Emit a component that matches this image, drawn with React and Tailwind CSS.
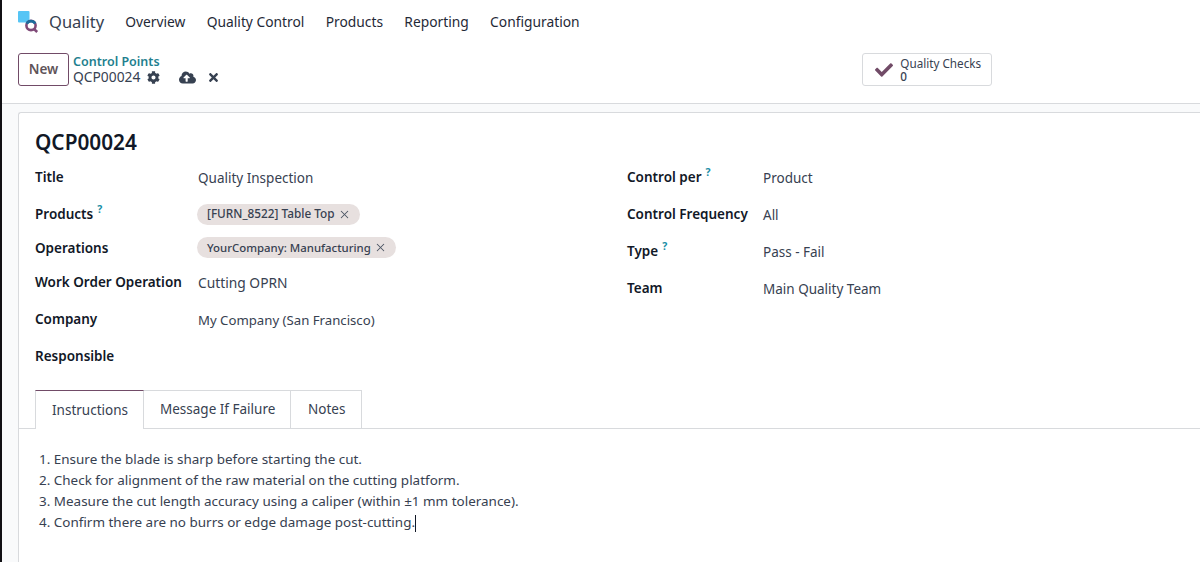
import { X } from "lucide-react";
import { FaCog, FaCloudUploadAlt, FaTimes, FaCheck } from "react-icons/fa";

const font = { fontFamily: '"Noto Sans", sans-serif' };

function Help() {
  return <span className="relative -top-[6px] ml-[4px] text-[10.5px] font-bold text-[#1a8ea6]">?</span>;
}

function Tag({ size, children }) {
  return (
    <span className={`-ml-px inline-flex h-[21px] items-center gap-[3px] rounded-full bg-[#e7e0df] pl-[10px] pr-[9px] ${size} font-medium leading-none text-[#374151]`}>
      {children}
      <X size={13} strokeWidth={1.9} className="text-[#4b5563]" />
    </span>
  );
}

function Row({ label, help, h, w, size = "text-[13.5px]", lift = "mt-[1px]", drop = "mt-[2px]", children }) {
  return (
    <div className={`flex items-center ${h}`}>
      <div className={`${w} ${lift} shrink-0 text-[13.5px] font-semibold leading-none text-[#111827]`}>
        {label}
        {help && <Help />}
      </div>
      <div className={`${size} ${drop} leading-none text-[#374151]`}>{children}</div>
    </div>
  );
}

export default function App() {
  return (
    <div style={font} className="flex h-[562px] w-[1200px] overflow-hidden bg-white text-[#374151]">
      <div className="w-[2px] shrink-0 bg-[#111014]" />
      <div className="flex min-w-0 flex-1 flex-col">
        <nav className="flex h-[44px] items-center pl-[16px]">
          <svg width="21" height="22" viewBox="0 0 21 22">
            <rect x="0" y="0" width="11.5" height="11.5" rx="1" fill="#56c5f5" />
            <circle cx="13" cy="14.5" r="4.6" fill="#fff" stroke="#7f4a78" strokeWidth="2.6" />
            <path d="M8.5 13.2A4.6 4.6 0 0 1 11.5 10.2V11.5H8.7z" fill="#1c6c9c" />
            <path d="M8.9 12.6a4.6 4.6 0 0 1 8.2 0" fill="none" stroke="#1c6c9c" strokeWidth="2.6" />
            <path d="M16 18l3.2 3" stroke="#7f4a78" strokeWidth="2.6" />
          </svg>
          <span className="ml-[10px] text-[16.5px] text-[#374151]">Quality</span>
          <div className="ml-[21px] flex gap-[21.3px] text-[13.8px] text-[#1f2937]">
            <span>Overview</span>
            <span>Quality Control</span>
            <span>Products</span>
            <span>Reporting</span>
            <span>Configuration</span>
          </div>
        </nav>

        <div className="flex h-[60px] items-start border-b border-[#d8dadd] pl-[16px] pt-[9px]">
          <button className="h-[33px] w-[51px] rounded-[3px] border border-[#714b67] text-[13.5px] font-semibold text-[#5f5459]">
            New
          </button>
          <div className="ml-[4px] flex flex-col">
            <span className="mt-[1px] text-[12.5px] font-semibold leading-[16px] text-[#1f7f8f]">Control Points</span>
            <div className="flex h-[14px] items-center text-[13.8px] leading-none text-[#374151]">
              <span>QCP00024</span>
              <FaCog size={13} className="ml-[7px] text-[#374151]" />
              <FaCloudUploadAlt size={17} className="ml-[19px] text-[#374151]" />
              <FaTimes size={13} className="ml-[11px] text-[#374151]" />
            </div>
          </div>
          <div className="ml-[642px] flex h-[33px] w-[130px] items-center rounded-[3px] border border-[#d8dadd] pl-[12px]">
            <FaCheck size={18} className="text-[#714b67]" />
            <div className="ml-[7px] flex flex-col text-[11.7px] leading-[12.5px] text-[#374151]">
              <span>Quality Checks</span>
              <span className="font-medium">0</span>
            </div>
          </div>
        </div>

        <div className="flex flex-1 bg-[#f9fafb] pl-[16px] pt-[8px]">
          <div className="flex-1 rounded-tl-[3px] border-l border-t border-[#d8dadd] bg-white">
            <div className="px-[16px] pt-[16px]">
              <h1 className="text-[20.8px] font-semibold leading-[27px] text-[#111827]">QCP00024</h1>
              <div className="mt-[3px] flex">
                <div className="w-[592px]">
                  <Row label="Title" h="h-[37px]" w="w-[163px]">Quality Inspection</Row>
                  <Row label="Products" help h="h-[36px]" w="w-[163px]" drop="mt-0"><Tag size="text-[11.8px]">[FURN_8522] Table Top</Tag></Row>
                  <Row label="Operations" h="h-[33px]" w="w-[163px]" drop="-mt-[2px]"><Tag size="text-[11.4px]">YourCompany: Manufacturing</Tag></Row>
                  <Row label="Work Order Operation" h="h-[36px]" w="w-[163px]" size="text-[13.8px]" lift="mt-0" drop="mt-0">Cutting OPRN</Row>
                  <Row label="Company" h="h-[37px]" w="w-[163px]" size="text-[13.2px]">My Company (San Francisco)</Row>
                  <Row label="Responsible" h="h-[37px]" w="w-[163px]"></Row>
                </div>
                <div>
                  <Row label="Control per" help h="h-[37px]" w="w-[136px]">Product</Row>
                  <Row label="Control Frequency" h="h-[37px]" w="w-[136px]">All</Row>
                  <Row label="Type" help h="h-[37px]" w="w-[136px]">Pass - Fail</Row>
                  <Row label="Team" h="h-[37px]" w="w-[136px]">Main Quality Team</Row>
                </div>
              </div>
            </div>

            <div className="mt-[15px] flex h-[39px] border-b border-[#d8dadd] pl-[16px] text-[13.5px]">
              <div className="-mb-px flex h-[39px] w-[109px] items-center border-x border-t border-[#d8dadd] border-t-[#714b67] bg-white pl-[16px] text-[#374151]">Instructions</div>
              <div className="flex h-[38px] w-[147px] items-center border-r border-t border-[#d8dadd] pl-[16px]">Message If Failure</div>
              <div className="flex h-[38px] w-[71px] items-center border-r border-t border-[#d8dadd] pl-[17px]">Notes</div>
            </div>

            <ol className="ml-[20px] mt-[20px] text-[13.46px] leading-[21px] text-[#374151]">
              <li>1. Ensure the blade is sharp before starting the cut.</li>
              <li>2. Check for alignment of the raw material on the cutting platform.</li>
              <li>3. Measure the cut length accuracy using a caliper (within ±1 mm tolerance).</li>
              <li>
                4. Confirm there are no burrs or edge damage post-cutting.
                <span className="inline-block h-[17px] w-px bg-[#111827] align-middle" />
              </li>
            </ol>
          </div>
        </div>
      </div>
    </div>
  );
}
